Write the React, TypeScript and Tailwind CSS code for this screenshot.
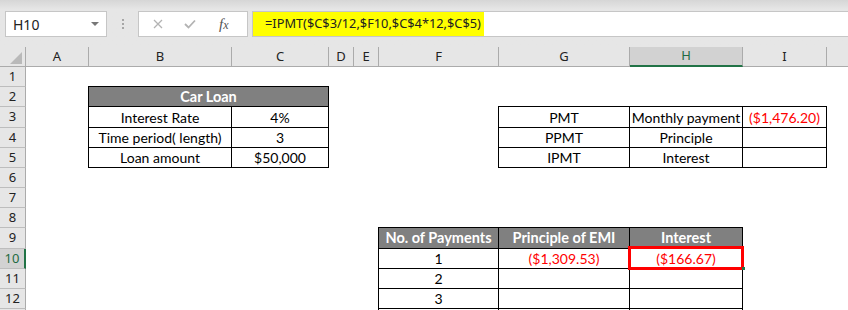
import React from 'react';

const cellFont = "font-['Lato','Open_Sans',sans-serif] text-[14px]";
const uiFont = "font-['Noto_Sans','Open_Sans',sans-serif]";

const columns = ['A', 'B', 'C', 'D', 'E', 'F', 'G', 'H', 'I', ''];
const rowNums = [1, 2, 3, 4, 5, 6, 7, 8, 9, 10, 11, 12, 13];

function TopBar() {
  return (
    <div className="h-[47px] bg-gradient-to-b from-[#d6d6d6] via-[#e6e6e6] via-[20%] to-[#e6e6e6] flex items-start pt-[11px] pl-[5px]">
      {/* name box */}
      <div className={`w-[102px] h-[26px] bg-white border border-[#c6c6c6] flex items-center justify-between pl-[7px] pr-[6px] ${uiFont} text-[14px] text-[#222]`}>
        <span>H10</span>
        <span className="w-0 h-0 border-l-[4px] border-r-[4px] border-t-[4px] border-l-transparent border-r-transparent border-t-[#777] mr-[1px]" />
      </div>
      {/* grip dots */}
      <div className="w-[31px] h-[26px] flex flex-col items-center justify-center gap-[2px]">
        <span className="w-[2px] h-[2px] bg-[#a6a6a6]" />
        <span className="w-[2px] h-[2px] bg-[#a6a6a6]" />
        <span className="w-[2px] h-[2px] bg-[#a6a6a6]" />
      </div>
      {/* cancel / enter / fx */}
      <div className="w-[110px] h-[26px] bg-white border border-[#c6c6c6] flex items-center pl-[14px] gap-[21px]">
        <svg width="10" height="10" viewBox="0 0 10 10">
          <path d="M1 1 L9 9 M9 1 L1 9" stroke="#b3b3b3" strokeWidth="1.3" />
        </svg>
        <svg width="12" height="10" viewBox="0 0 12 10">
          <path d="M1 5 L4.5 8.5 L11 1.5" stroke="#b3b3b3" strokeWidth="1.8" fill="none" />
        </svg>
        <span className="font-['Liberation_Serif',serif] italic text-[15px] text-[#555] ml-[2px] leading-none">
          f<span className="text-[12px]">x</span>
        </span>
      </div>
      {/* formula bar */}
      <div className="ml-[4px] flex-1 h-[26px] bg-white border-y border-l border-[#c6c6c6] flex">
        <div className={`bg-[#ffff00] h-full flex items-center pl-[12px] pr-[6px] w-[231px] ${uiFont} text-[12.8px] text-[#222]`}>
          =IPMT($C$3/12,$F10,$C$4*12,$C$5)
        </div>
      </div>
    </div>
  );
}

function Cell({
  children,
  className = '',
}: {
  children?: React.ReactNode;
  className?: string;
}) {
  return (
    <div className={`border-r border-b border-black flex items-center justify-center whitespace-nowrap overflow-visible ${className}`}>
      {children}
    </div>
  );
}

const headCell = 'bg-[#808080] text-white font-bold text-[14.5px]';

function CarLoanTable() {
  return (
    <div className={`col-start-3 col-span-2 row-start-3 row-span-4 -mt-px -ml-px border-l border-t border-black grid grid-cols-[143px_97px] grid-rows-[20px_21px_20px_20px] bg-white ${cellFont} text-black`}>
      <Cell className={`col-span-2 ${headCell}`}>Car Loan</Cell>
      <Cell>Interest Rate</Cell>
      <Cell>4%</Cell>
      <Cell>Time period( length)</Cell>
      <Cell>3</Cell>
      <Cell>Loan amount</Cell>
      <Cell>$50,000</Cell>
    </div>
  );
}

function PmtTable() {
  return (
    <div className={`col-start-8 col-span-3 row-start-4 row-span-3 -mt-px -ml-px border-l border-t border-black grid grid-cols-[131px_113px_84px] grid-rows-[21px_20px_20px] bg-white ${cellFont} text-black`}>
      <Cell>PMT</Cell>
      <Cell>Monthly payment</Cell>
      <Cell className="text-[#ff0000]">($1,476.20)</Cell>
      <Cell>PPMT</Cell>
      <Cell>Principle</Cell>
      <Cell />
      <Cell>IPMT</Cell>
      <Cell>Interest</Cell>
      <Cell />
    </div>
  );
}

function PaymentsTable() {
  return (
    <div className={`col-start-7 col-span-3 row-start-10 row-span-5 -mt-px -ml-px border-l border-t border-black grid grid-cols-[120px_131px_113px] grid-rows-[21px_20px_20px_20px_20px] bg-white ${cellFont} text-black`}>
      <Cell className={headCell}>No. of Payments</Cell>
      <Cell className={headCell}>Principle of EMI</Cell>
      <Cell className={headCell}>Interest</Cell>
      <Cell>1</Cell>
      <Cell className="text-[#ff0000]">($1,309.53)</Cell>
      <Cell className="relative text-[#ff0000]">
        ($166.67)
        <div className="absolute -left-[2px] -top-[3px] w-[116px] h-[24px] border-[3px] border-[#ff0000]" />
        <div className="absolute -right-[3px] -bottom-[2px] w-[3px] h-[3px] bg-[#217346]" />
      </Cell>
      <Cell>2</Cell>
      <Cell />
      <Cell />
      <Cell>3</Cell>
      <Cell />
      <Cell />
      <Cell />
      <Cell />
      <Cell />
    </div>
  );
}

export default function App() {
  return (
    <div className="w-[848px] h-[310px] bg-white overflow-hidden">
      <TopBar />
      <div className="grid grid-cols-[26px_63px_143px_97px_25px_25px_120px_131px_113px_84px_1fr] grid-rows-[20px_20px_20px_21px_20px_20px_20px_20px_20px_21px_20px_20px_20px_20px]">
        {/* corner */}
        <div className="col-start-1 row-start-1 bg-[#e6e6e6] border-r border-b border-[#ababab] flex items-end justify-end pr-[3px] pb-[2px]">
          <div className="w-0 h-0" style={{ borderLeft: '12px solid transparent', borderBottom: '12px solid #b9b9b9' }} />
        </div>
        {columns.map((c, i) => (
          <div
            key={`col-${i}`}
            className={`row-start-1 flex items-center justify-center ${uiFont} text-[13px] ${
              c === 'H'
                ? 'bg-[#d2d2d2] border-b-2 border-b-[#217346] border-r border-r-[#ababab] text-[#1e6b41]'
                : 'bg-[#e6e6e6] border-b border-[#ababab] text-[#222] ' + (i < columns.length - 1 ? 'border-r' : '')
            }`}
          >
            {c}
          </div>
        ))}
        {rowNums.map((n) => (
          <div
            key={`row-${n}`}
            className={`col-start-1 flex items-center justify-center ${uiFont} text-[13px] border-b border-[#bdbdbd] ${
              n === 10
                ? 'bg-[#d2d2d2] border-r-2 border-r-[#217346] text-[#1e6b41]'
                : 'bg-[#e6e6e6] border-r border-r-[#ababab] text-[#222]'
            }`}
            style={{ gridRowStart: n + 1 }}
          >
            {n < 13 ? n : null}
          </div>
        ))}
        <CarLoanTable />
        <PmtTable />
        <PaymentsTable />
      </div>
    </div>
  );
}
